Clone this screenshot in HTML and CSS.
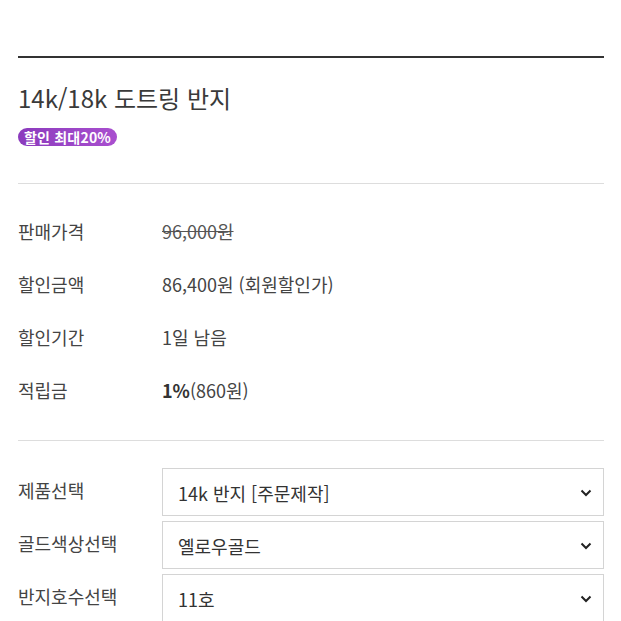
FILE: index.html
```html
<!DOCTYPE html>
<html lang="ko">
<head>
  <meta charset="UTF-8" />
  <meta name="viewport" content="width=device-width, initial-scale=1.0"/>
  <title>14k/18k 도트링 반지</title>
  <link rel="stylesheet" href="styles.css">
</head>
<body>

<div class="product">
  <div class="head">
    <h1 class="title">14k/18k 도트링 반지</h1>
    <span class="badge">할인 최대20%</span>
  </div>

  <div class="info">
    <div class="row">
      <div class="label">판매가격</div>
      <div class="value"><del>96,000원</del></div>
    </div>
    <div class="row">
      <div class="label">할인금액</div>
      <div class="value">86,400원 (회원할인가)</div>
    </div>
    <div class="row">
      <div class="label">할인기간</div>
      <div class="value">1일 남음</div>
    </div>
    <div class="row">
      <div class="label">적립금</div>
      <div class="value"><b>1%</b>(860원)</div>
    </div>
  </div>

  <div class="options">
    <div class="opt">
      <div class="label">제품선택</div>
      <div class="select">
        <span>14k 반지 [주문제작]</span>
        <svg class="chev" width="12" height="8" viewBox="0 0 12 8"><path d="M1.5 1.5 L6 6 L10.5 1.5" fill="none" stroke="#222" stroke-width="2"/></svg>
      </div>
    </div>
    <div class="opt">
      <div class="label">골드색상선택</div>
      <div class="select">
        <span>옐로우골드</span>
        <svg class="chev" width="12" height="8" viewBox="0 0 12 8"><path d="M1.5 1.5 L6 6 L10.5 1.5" fill="none" stroke="#222" stroke-width="2"/></svg>
      </div>
    </div>
    <div class="opt">
      <div class="label">반지호수선택</div>
      <div class="select">
        <span>11호</span>
        <svg class="chev" width="12" height="8" viewBox="0 0 12 8"><path d="M1.5 1.5 L6 6 L10.5 1.5" fill="none" stroke="#222" stroke-width="2"/></svg>
      </div>
    </div>
  </div>
</div>

</body>
</html>
```

FILE: styles.css
```css
body {
  margin: 0;
  background: #fff;
  color: #444;
  font-family: "Noto Sans CJK KR", "Noto Sans", sans-serif;
  font-size: 18px;
  overflow: hidden;
}

.product {
  margin: 56px 17px 0 18px;
  border-top: 2px solid #333;
}

.head {
  padding: 22px 0 35px;
  border-bottom: 1px solid #ddd;
}

.title {
  margin: 0;
  font-size: 24px;
  font-weight: 400;
  line-height: 36px;
  color: #3a3a3a;
}

.badge {
  display: inline-block;
  margin-top: 12px;
  padding: 0 6px;
  height: 18px;
  line-height: 18px;
  border-radius: 9px;
  background: linear-gradient(to right, #8b3bbd, #a94fcf);
  color: #fff;
  font-size: 14px;
  font-weight: 700;
  letter-spacing: 0.2px;
}

.info {
  padding: 20px 0 24px;
  border-bottom: 1px solid #ddd;
}

.row {
  display: flex;
  align-items: center;
  height: 53px;
}

.label {
  width: 144px;
  flex-shrink: 0;
  color: #444;
}

.value {
  color: #444;
}

.value del {
  color: #555;
}

.value b {
  font-weight: 700;
  color: #333;
}

.options {
  padding-top: 27px;
  display: flex;
  flex-direction: column;
  gap: 5px;
}

.opt {
  display: flex;
  align-items: center;
}

.opt .label {
  padding-bottom: 5px;
}

.select {
  flex: 1;
  height: 48px;
  box-sizing: border-box;
  border: 1px solid #d4d4d4;
  display: flex;
  align-items: center;
  justify-content: space-between;
  padding: 2px 11px 0 15px;
  color: #333;
}
```
